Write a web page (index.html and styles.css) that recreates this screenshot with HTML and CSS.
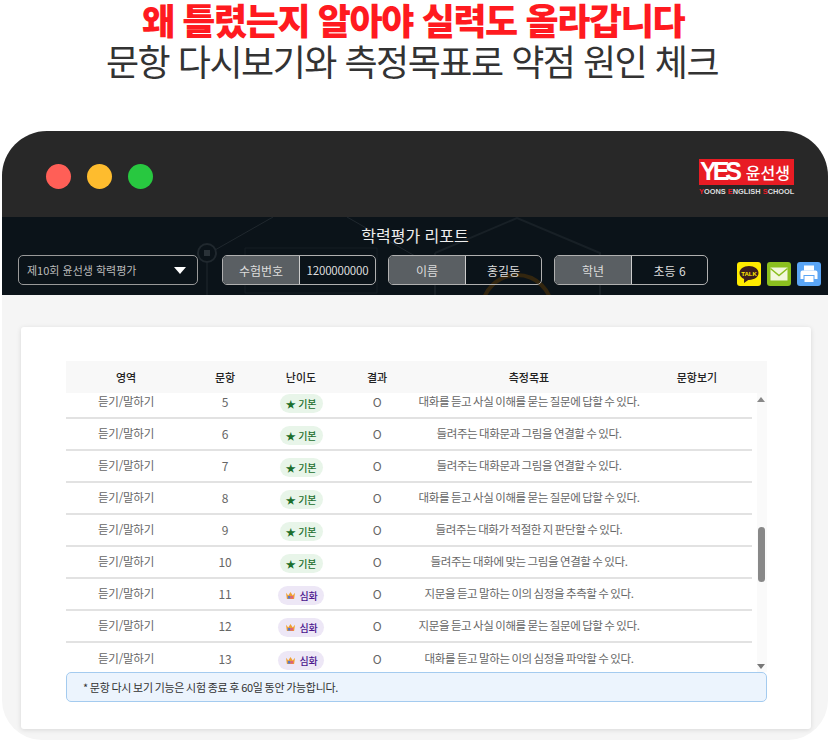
FILE: index.html
```html
<!DOCTYPE html>
<html lang="ko">
<head>
    <meta charset="UTF-8">
    <meta name="viewport" content="width=device-width, initial-scale=1.0">
    <title>학력평가 리포트</title>
    <link rel="stylesheet" href="styles.css">
</head>
<body>
    <h1 class="headline">왜 틀렸는지 알아야 실력도 올라갑니다</h1>
    <p class="subhead">문항 다시보기와 측정목표로 약점 원인 체크</p>

    <div class="window">
        <div class="titlebar">
            <div class="dots">
                <span class="dot dot-red"></span>
                <span class="dot dot-yellow"></span>
                <span class="dot dot-green"></span>
            </div>
            <div class="logo">
                <div class="logo-box">
                    <span class="logo-yes">YES</span>
                    <span class="logo-name">윤선생</span>
                </div>
                <div class="logo-sub"><b>Y</b>OONS <b>E</b>NGLISH <b>S</b>CHOOL</div>
            </div>
        </div>

        <div class="report-head">
            <!-- 배경 장식 -->
            <svg class="report-bg" width="826" height="78" viewBox="0 0 826 78" fill="none">
                <g stroke="#20282e" stroke-width="1">
                    <path d="M271 0L213 33M205 46V78M345 0L420 43"/>
                    <circle cx="205" cy="36" r="9" stroke-width="2"/>
                    <path d="M243 31H375V76H243Z" stroke="#161e24"/>
                    <path d="M433 36L515 1L598 36V78M433 36V78" stroke="#182026" stroke-width="2"/>
                </g>
                <rect x="202" y="33" width="6" height="6" fill="#2a3238"/>
                <circle cx="515" cy="93" r="35" stroke="#33260f" stroke-width="4"/>
            </svg>
            <h2 class="report-title">학력평가 리포트</h2>
            <div class="report-controls">
                <div class="select-box">
                    <span>제10회 윤선생 학력평가</span>
                    <i class="select-arrow"></i>
                </div>
                <div class="info-box">
                    <span class="info-label">수험번호</span>
                    <span class="info-value info-number">1200000000</span>
                </div>
                <div class="info-box">
                    <span class="info-label">이름</span>
                    <span class="info-value">홍길동</span>
                </div>
                <div class="info-box">
                    <span class="info-label">학년</span>
                    <span class="info-value">초등 6</span>
                </div>
                <div class="share-icons">
                    <span class="share share-talk">
                        <svg width="24" height="24" viewBox="0 0 24 24">
                            <path d="M12 4C6.5 4 2.500 7.200 2.500 11c0 2.700 1.900 4.800 4.600 5.900L7 21l4.300-3.100h.7c5.500 0 9.500-3 9.500-6.900S17.500 4 12 4z" fill="#3b1e1e"/>
                            <text x="12" y="13.500" class="talk-text">TALK</text>
                        </svg>
                    </span>
                    <span class="share share-mail">
                        <svg width="24" height="24" viewBox="0 0 24 24">
                            <rect x="3.500" y="5.500" width="17" height="13" fill="#f2f7dc"/>
                            <path d="M3.500 6.500L12 13.500L20.500 6.500" fill="none" stroke="#8bbf1f" stroke-width="1.500"/>
                        </svg>
                    </span>
                    <span class="share share-print">
                        <svg width="24" height="24" viewBox="0 0 24 24">
                            <rect x="7" y="3.500" width="10" height="5" fill="#fff"/>
                            <path d="M3.500 10.500a2 2 0 0 1 2-2h13a2 2 0 0 1 2 2v6.500h-17z" fill="#fff"/>
                            <rect x="7" y="13.500" width="10" height="7" fill="#fff" stroke="#5aa5f5"/>
                        </svg>
                    </span>
                </div>
            </div>
        </div>

        <div class="report-body">
            <div class="card">
                <div class="table-head">
                    <span>영역</span>
                    <span>문항</span>
                    <span>난이도</span>
                    <span>결과</span>
                    <span>측정목표</span>
                    <span>문항보기</span>
                </div>
                <div class="table-scroll">
                    <div class="table-rows">
                        <div class="row"><span>듣기/말하기</span><span>5</span><span><em class="pill pill-basic">★ 기본</em></span><span>O</span><span class="goal">대화를 듣고 사실 이해를 묻는 질문에 답할 수 있다.</span><span></span></div>
                        <div class="row"><span>듣기/말하기</span><span>6</span><span><em class="pill pill-basic">★ 기본</em></span><span>O</span><span class="goal">들려주는 대화문과 그림을 연결할 수 있다.</span><span></span></div>
                        <div class="row"><span>듣기/말하기</span><span>7</span><span><em class="pill pill-basic">★ 기본</em></span><span>O</span><span class="goal">들려주는 대화문과 그림을 연결할 수 있다.</span><span></span></div>
                        <div class="row"><span>듣기/말하기</span><span>8</span><span><em class="pill pill-basic">★ 기본</em></span><span>O</span><span class="goal">대화를 듣고 사실 이해를 묻는 질문에 답할 수 있다.</span><span></span></div>
                        <div class="row"><span>듣기/말하기</span><span>9</span><span><em class="pill pill-basic">★ 기본</em></span><span>O</span><span class="goal">들려주는 대화가 적절한 지 판단할 수 있다.</span><span></span></div>
                        <div class="row"><span>듣기/말하기</span><span>10</span><span><em class="pill pill-basic">★ 기본</em></span><span>O</span><span class="goal">들려주는 대화에 맞는 그림을 연결할 수 있다.</span><span></span></div>
                        <div class="row"><span>듣기/말하기</span><span>11</span><span><em class="pill pill-hard"><svg class="crown" viewBox="0 0 12 10"><path d="M1 2l2.500 3L6 1l2.500 4L11 2l-1 7H2z" fill="#f0a030"/><rect x="3" y="5.500" width="3" height="3" fill="#5a78c8"/><rect x="6" y="5.500" width="3" height="3" fill="#e0607a"/></svg>심화</em></span><span>O</span><span class="goal">지문을 듣고 말하는 이의 심정을 추측할 수 있다.</span><span></span></div>
                        <div class="row"><span>듣기/말하기</span><span>12</span><span><em class="pill pill-hard"><svg class="crown" viewBox="0 0 12 10"><path d="M1 2l2.500 3L6 1l2.500 4L11 2l-1 7H2z" fill="#f0a030"/><rect x="3" y="5.500" width="3" height="3" fill="#5a78c8"/><rect x="6" y="5.500" width="3" height="3" fill="#e0607a"/></svg>심화</em></span><span>O</span><span class="goal">지문을 듣고 사실 이해를 묻는 질문에 답할 수 있다.</span><span></span></div>
                        <div class="row"><span>듣기/말하기</span><span>13</span><span><em class="pill pill-hard"><svg class="crown" viewBox="0 0 12 10"><path d="M1 2l2.500 3L6 1l2.500 4L11 2l-1 7H2z" fill="#f0a030"/><rect x="3" y="5.500" width="3" height="3" fill="#5a78c8"/><rect x="6" y="5.500" width="3" height="3" fill="#e0607a"/></svg>심화</em></span><span>O</span><span class="goal">대화를 듣고 말하는 이의 심정을 파악할 수 있다.</span><span></span></div>
                    </div>
                    <div class="scrollbar">
                        <i class="scroll-up"></i>
                        <i class="scroll-thumb"></i>
                        <i class="scroll-down"></i>
                    </div>
                </div>
                <div class="notice">* 문항 다시 보기 기능은 시험 종료 후 60일 동안 가능합니다.</div>
            </div>
        </div>
    </div>
</body>
</html>
```

FILE: styles.css
```css
* {
    margin: 0;
    padding: 0;
    box-sizing: border-box;
}

body {
    font-family: "Noto Sans CJK KR", "Noto Sans", sans-serif;
    background-color: white;
    width: 830px;
    height: 743px;
    overflow: hidden;
}

.headline {
    font-size: 36px;
    line-height: 38px;
    font-weight: 900;
    color: #ff1a20;
    text-align: center;
    letter-spacing: -1.4px;
    padding-right: 4px;
}

.subhead {
    font-size: 36px;
    line-height: 44px;
    color: #333;
    text-align: center;
    letter-spacing: -1.5px;
    padding-right: 6px;
}

.window {
    width: 826px;
    height: 609px;
    margin: 49px 0 0 2px;
    border-radius: 45px 45px 40px 40px;
    overflow: hidden;
    background-color: #f5f5f5;
    display: flex;
    flex-direction: column;
}

.titlebar {
    height: 86px;
    background-color: #282828;
    display: flex;
    align-items: center;
    justify-content: space-between;
    padding: 0 34px 0 44px;
}

.dots {
    display: flex;
    gap: 16px;
    margin-top: 4px;
}

.dot {
    width: 25px;
    height: 25px;
    border-radius: 50%;
}

.dot-red { background-color: #ff5f57; }
.dot-yellow { background-color: #febc2e; }
.dot-green { background-color: #28c840; }

.logo {
    width: 95px;
    margin-top: 6px;
}

.logo-box {
    height: 26px;
    background-color: #e81c24;
    color: white;
    display: flex;
    align-items: center;
    justify-content: space-between;
    padding: 0 4px 0 1px;
    white-space: nowrap;
}

.logo-yes {
    font-family: "Liberation Sans", sans-serif;
    font-size: 25px;
    font-weight: bold;
    letter-spacing: -4px;
}

.logo-name {
    font-size: 16px;
    font-weight: 500;
}

.logo-sub {
    font-family: "Liberation Sans", sans-serif;
    font-size: 7.400px;
    font-weight: bold;
    line-height: 8px;
    margin-top: 3px;
    color: #ddd;
    white-space: nowrap;
}

.logo-sub b {
    color: #e81c24;
}

.report-head {
    height: 78px;
    background-color: #0b1319;
    position: relative;
    overflow: hidden;
    flex-shrink: 0;
}

.report-bg {
    position: absolute;
    left: 0;
    top: 0;
}

.report-title {
    position: relative;
    font-size: 16px;
    line-height: 24px;
    font-weight: 400;
    color: #eee;
    text-align: center;
    padding-top: 6px;
    height: 38px;
}

.report-controls {
    position: relative;
    display: flex;
    align-items: flex-start;
    padding-left: 16px;
    font-size: 12px;
    color: #ddd;
}

.select-box {
    width: 180px;
    height: 30px;
    border: 1px solid #999;
    border-radius: 5px;
    display: flex;
    align-items: center;
    justify-content: space-between;
    padding: 0 11px 0 8px;
    margin-right: 24px;
    font-size: 11px;
    color: #bbb;
}

.select-arrow {
    width: 0;
    height: 0;
    border-left: 6px solid transparent;
    border-right: 6px solid transparent;
    border-top: 7px solid white;
}

.info-box {
    width: 154px;
    height: 30px;
    border: 1px solid #b0b0b0;
    border-radius: 5px;
    display: flex;
    overflow: hidden;
    margin-right: 12px;
}

.info-label {
    width: 77px;
    background-color: #5a5f63;
    border-right: 1px solid #ccc;
    display: flex;
    align-items: center;
    justify-content: center;
}

.info-value {
    flex: 1;
    display: flex;
    align-items: center;
    justify-content: center;
}

.info-number {
    font-size: 11.500px;
    letter-spacing: -0.2px;
}

.share-icons {
    display: flex;
    gap: 6px;
    margin: 7px 0 0 17px;
}

.share {
    width: 24px;
    height: 24px;
    border-radius: 3px;
    display: block;
}

.share svg {
    display: block;
}

.share-talk { background-color: #ffeb00; }
.share-mail { background-color: #8bbf1f; }
.share-print { background-color: #5aa5f5; }

.talk-text {
    font-family: "Liberation Sans", sans-serif;
    font-size: 6px;
    font-weight: bold;
    fill: #ffeb00;
    text-anchor: middle;
}

.report-body {
    flex: 1;
    padding: 32px 17px 11px 19px;
}

.card {
    height: 402px;
    background-color: white;
    border-radius: 3px;
    box-shadow: 0 1px 5px rgba(0, 0, 0, 0.12);
    padding: 34px 44px 0 45px;
}

.table-head,
.row {
    display: grid;
    grid-template-columns: 120px 78px 74px 78px 226px 110px;
    text-align: center;
    align-items: center;
}

.table-head {
    height: 32px;
    background-color: #f8f8f8;
    font-size: 11px;
    font-weight: 500;
    color: #222;
}

.table-scroll {
    height: 279px;
    position: relative;
    overflow: hidden;
}

.table-rows {
    margin-top: -6px;
    width: 686px;
}

.row {
    height: 32px;
    padding-bottom: 2px;
    border-bottom: 2px solid #e2e2e2;
    font-size: 11.500px;
    color: #666;
    letter-spacing: -0.2px;
}

.row:last-child {
    border-bottom: 0;
}

.row > span:nth-child(2),
.row > span:nth-child(4) {
    font-size: 12px;
}

.row > .goal {
    letter-spacing: -0.4px;
    word-spacing: -1px;
    white-space: nowrap;
}

.pill {
    display: inline-flex;
    align-items: center;
    justify-content: center;
    height: 19px;
    border-radius: 10px;
    font-style: normal;
    font-size: 10px;
    font-weight: 500;
    position: relative;
    top: 2px;
    vertical-align: middle;
}

.pill-basic {
    width: 43px;
    background-color: #e8f5e9;
    color: #1b6e2c;
}

.pill-hard {
    width: 46px;
    background-color: #ede7f6;
    color: #4a148c;
}

.crown {
    width: 11px;
    height: 9px;
    margin-right: 4px;
}

.scrollbar {
    position: absolute;
    left: 691px;
    top: 0;
    bottom: 0;
    width: 10px;
    background-color: #fafafa;
}

.scrollbar i {
    position: absolute;
    display: block;
}

.scroll-up,
.scroll-down {
    left: 0;
    width: 0;
    height: 0;
    border-left: 4px solid transparent;
    border-right: 4px solid transparent;
}

.scroll-up {
    top: 4px;
    border-bottom: 5px solid #888;
}

.scroll-down {
    bottom: 3px;
    border-top: 5px solid #777;
}

.scroll-thumb {
    left: 1px;
    top: 134px;
    width: 7px;
    height: 55px;
    border-radius: 4px;
    background-color: #888;
}

.notice {
    height: 30px;
    background-color: #ecf4fd;
    border: 1px solid #a4cbef;
    border-radius: 5px;
    padding-left: 16px;
    font-size: 11px;
    line-height: 28px;
    color: #333;
    letter-spacing: -0.3px;
    word-spacing: -0.8px;
}
```
